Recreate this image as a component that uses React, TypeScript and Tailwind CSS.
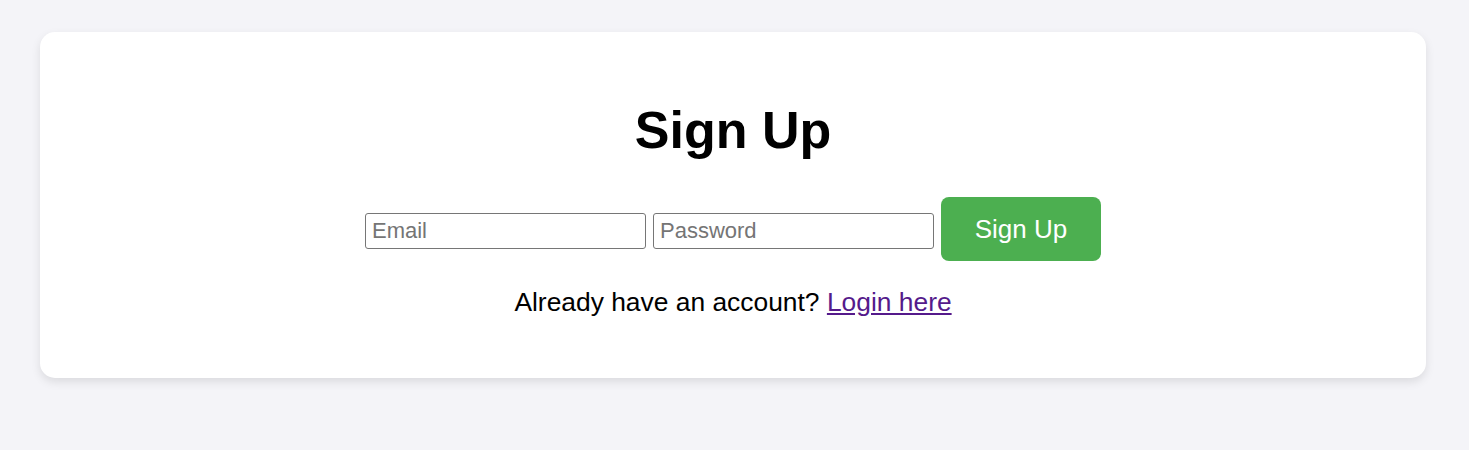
export default function App() {
  return (
    <div
      className="min-h-[450px] w-full bg-[#f4f4f8] pt-8"
      style={{ fontFamily: '"Liberation Sans", Arial, sans-serif' }}
    >
      <div className="ml-10 flex w-[1386px] flex-col items-center rounded-[15px] bg-white pt-[70px] pb-[61px] shadow-[0_4px_10px_rgba(0,0,0,0.1)]">
        <h1 className="text-[52px] leading-[56px] font-bold text-black">Sign Up</h1>

        <form className="mt-[39px] flex items-center gap-[7px]" onSubmit={(e) => e.preventDefault()}>
          <input
            type="email"
            placeholder="Email"
            className="mt-[4px] h-[36px] w-[281px] rounded-[3px] border border-[#767676] px-[6px] text-[22px] text-black placeholder:text-[#757575] outline-none"
          />
          <input
            type="password"
            placeholder="Password"
            className="mt-[4px] h-[36px] w-[281px] rounded-[3px] border border-[#767676] px-[6px] text-[22px] text-black placeholder:text-[#757575] outline-none"
          />
          <button
            type="submit"
            className="h-16 w-40 rounded-lg bg-[#4caf50] text-[26px] text-white"
          >
            Sign Up
          </button>
        </form>

        <p className="mt-[26px] text-[26.4px] leading-[30px] text-black">
          Already have an account?{" "}
          <a href="#" className="text-[#551a8b] underline">
            Login here
          </a>
        </p>
      </div>
    </div>
  );
}
